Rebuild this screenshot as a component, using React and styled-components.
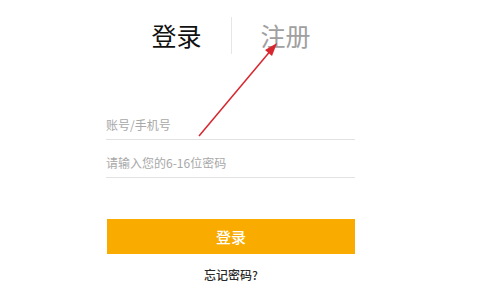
import styled, { createGlobalStyle } from "styled-components";

const GlobalStyle = createGlobalStyle`
  html, body {
    margin: 0;
    padding: 0;
    background: #fff;
    font-family: "Noto Sans CJK SC", "Noto Sans", sans-serif;
  }
  * { box-sizing: border-box; }
`;

const Page = styled.div`
  position: relative;
  width: 480px;
  height: 287px;
  overflow: hidden;
  background: #fff;
`;

const Panel = styled.div`
  width: 248px;
  margin-left: 107px;
  padding-top: 17px;
  display: flex;
  flex-direction: column;
`;

const Tabs = styled.div`
  display: flex;
  justify-content: center;
  align-items: center;
  height: 37px;
`;

const Tab = styled.div`
  font-size: 25px;
  line-height: 1;
  color: ${(p) => (p.$active ? "#111" : "#a0a0a0")};
`;

const Divider = styled.div`
  width: 1px;
  height: 37px;
  background: #e6e6e6;
  margin: 0 29px;
`;

const Form = styled.form`
  margin-top: 48px;
  display: flex;
  flex-direction: column;
`;

const Field = styled.input`
  height: 38px;
  border: none;
  border-bottom: 1px solid #e2e2e2;
  outline: none;
  padding: 8px 0 0 0;
  font-family: inherit;
  font-size: 12px;
  color: #333;
  background: transparent;
  margin-left: -1px;

  &::placeholder {
    color: #a8a8a8;
  }
`;

const Submit = styled.button`
  margin-top: 41px;
  height: 35px;
  border: none;
  background: #f9ab00;
  color: #fff;
  font-family: inherit;
  font-size: 15px;
  font-weight: 500;
  cursor: pointer;
`;

const Forgot = styled.div`
  margin-top: 12px;
  text-align: center;
  font-size: 12px;
  font-weight: 500;
  color: #2a2a2a;
`;

const Arrow = styled.svg`
  position: absolute;
  left: 0;
  top: 0;
  pointer-events: none;
`;

export default function App() {
  return (
    <Page>
      <GlobalStyle />
      <Panel>
        <Tabs>
          <Tab $active>登录</Tab>
          <Divider />
          <Tab>注册</Tab>
        </Tabs>
        <Form onSubmit={(e) => e.preventDefault()}>
          <Field type="text" placeholder="账号/手机号" />
          <Field type="password" placeholder="请输入您的6-16位密码" />
          <Submit type="submit">登录</Submit>
          <Forgot>忘记密码?</Forgot>
        </Form>
      </Panel>
      <Arrow width="480" height="287" viewBox="0 0 480 287">
        <line x1="199" y1="136" x2="272" y2="49" stroke="#d8262e" strokeWidth="1.5" />
        <polygon points="277,43 265,50 272,56" fill="#d8262e" />
      </Arrow>
    </Page>
  );
}
